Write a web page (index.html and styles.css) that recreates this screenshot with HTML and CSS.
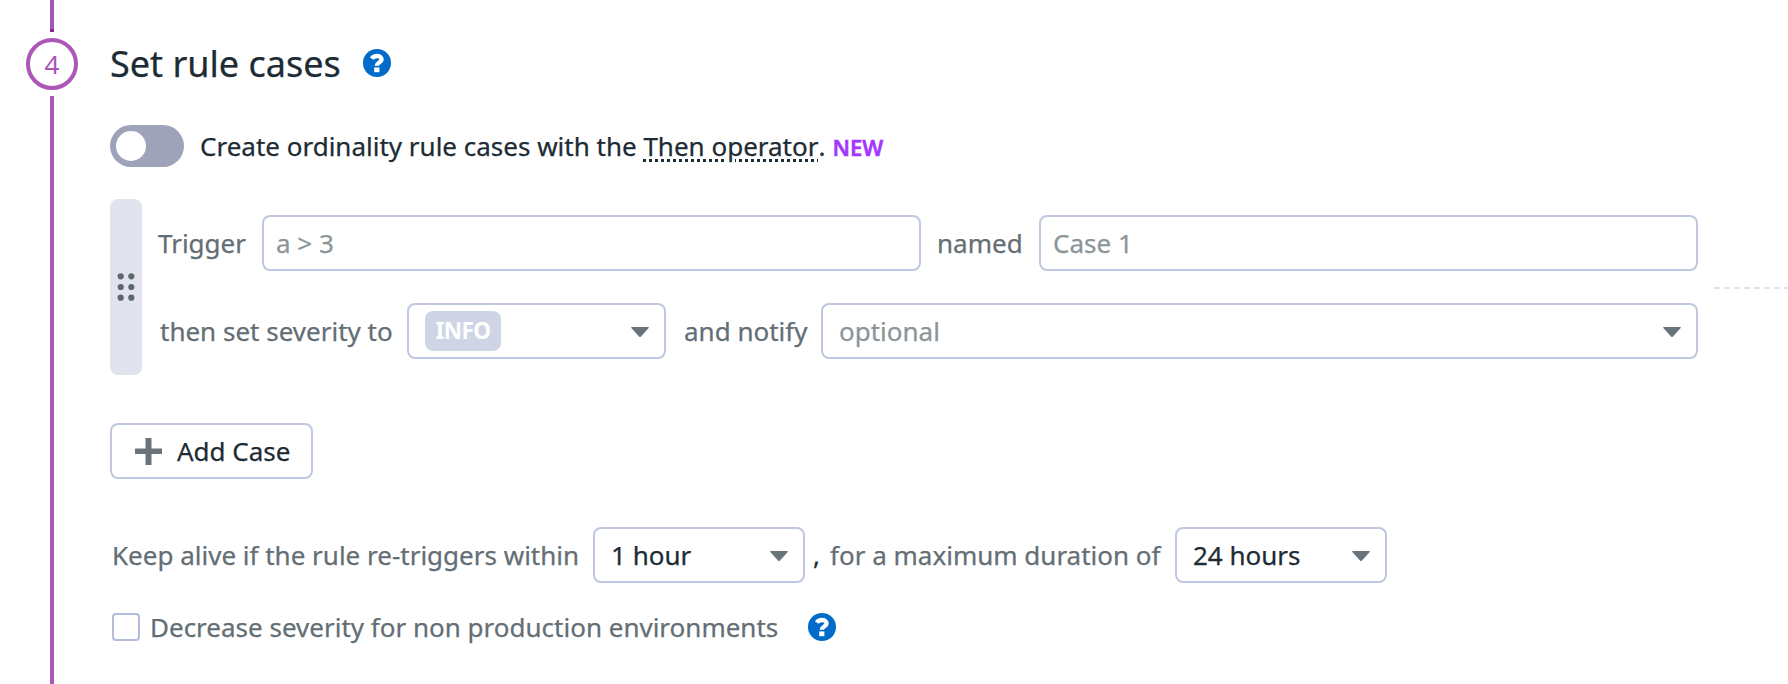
FILE: index.html
```html
<!DOCTYPE html>
<html lang="en">
<head>
<meta charset="utf-8">
<title>Set rule cases</title>
<link rel="stylesheet" href="styles.css">
</head>
<body>
<div class="step">
  <div class="rail">
    <div class="rail-top"></div>
    <div class="step-number">4</div>
    <div class="rail-bottom"></div>
  </div>
  <main class="content">
    <header class="heading">
      <h2 class="title">Set rule cases</h2>
      <svg class="help" viewBox="0 0 28 28"><circle cx="14" cy="14" r="14"/><path class="hook" d="M8.800 9.600C9.900 7.900 11.600 7 13.800 7c2.900 0 4.800 1.400 4.800 3.500 0 3-4.800 3.100-4.800 6.300"/><path class="dot" d="M11.200 18.400h5.200v4.800h-5.200z"/></svg>
    </header>
    <div class="ordinality">
      <span class="toggle"><span class="knob"></span></span>
      <span class="ord-text">Create ordinality rule cases with the <span class="term">Then operator</span><span class="stop">.</span></span>
      <span class="new">NEW</span>
    </div>
    <section class="case">
      <div class="handle">
        <svg width="18" height="28" viewBox="0 0 18 28"><circle cx="3.700" cy="3.300" r="3.100"/><circle cx="14.300" cy="3.300" r="3.100"/><circle cx="3.700" cy="14" r="3.100"/><circle cx="14.300" cy="14" r="3.100"/><circle cx="3.700" cy="24.700" r="3.100"/><circle cx="14.300" cy="24.700" r="3.100"/></svg>
      </div>
      <div class="case-body">
        <div class="row">
          <span class="label trigger">Trigger</span>
          <div class="field input">a &gt; 3</div>
          <span class="label named">named</span>
          <div class="field input">Case 1</div>
        </div>
        <div class="row">
          <span class="label severity">then set severity to</span>
          <div class="field select severity-select"><span class="badge">INFO</span><svg class="caret" viewBox="0 0 18 10"><path d="M.8 0h16.400q1.200 0 .5 1L10 9.400q-1 1-2 0L.3 1Q-.4 0 .8 0z"/></svg></div>
          <span class="label notify">and notify</span>
          <div class="field select grow">optional<svg class="caret" viewBox="0 0 18 10"><path d="M.8 0h16.400q1.200 0 .5 1L10 9.400q-1 1-2 0L.3 1Q-.4 0 .8 0z"/></svg></div>
        </div>
      </div>
      <div class="dashes"></div>
    </section>
    <div class="add">
      <svg width="27" height="27" viewBox="0 0 27 27"><path d="M10.500 0h6v10.500H27v5.500H16.500v11h-6V16H0v-5.500h10.500z"/></svg>
      <span>Add Case</span>
    </div>
    <div class="row keep">
      <span class="label alive">Keep alive if the rule re-triggers within</span>
      <div class="field select time">1 hour<svg class="caret" viewBox="0 0 18 10"><path d="M.8 0h16.400q1.200 0 .5 1L10 9.400q-1 1-2 0L.3 1Q-.4 0 .8 0z"/></svg></div>
      <span class="comma">,</span>
      <span class="label duration">for a maximum duration of</span>
      <div class="field select time">24 hours<svg class="caret" viewBox="0 0 18 10"><path d="M.8 0h16.400q1.200 0 .5 1L10 9.400q-1 1-2 0L.3 1Q-.4 0 .8 0z"/></svg></div>
    </div>
    <div class="decrease">
      <span class="checkbox"></span>
      <span class="label dec-text">Decrease severity for non production environments</span>
      <svg class="help" viewBox="0 0 28 28"><circle cx="14" cy="14" r="14"/><path class="hook" d="M8.800 9.600C9.900 7.900 11.600 7 13.800 7c2.900 0 4.800 1.400 4.800 3.500 0 3-4.800 3.100-4.800 6.300"/><path class="dot" d="M11.200 18.400h5.200v4.800h-5.200z"/></svg>
    </div>
  </main>
</div>
</body>
</html>
```

FILE: styles.css
```css
* { box-sizing: border-box; }
body {
  margin: 0;
  background: #fff;
  color: #1c2b34;
  font: 26px/36px "Noto Sans", sans-serif;
  -webkit-text-stroke: .25px;
  overflow: hidden;
}
svg { display: block; flex: none; }
.step { display: flex; height: 684px; }
.rail {
  width: 110px;
  padding-left: 26px;
  flex: none;
  display: flex;
  flex-direction: column;
}
.rail-top {
  width: 4px;
  height: 32px;
  margin-left: 24px;
  background: #a157b8;
  border-bottom: 3px solid #8f2299;
}
.step-number {
  width: 52px;
  height: 52px;
  margin: 6px 0;
  border: 4px solid #ac56b8;
  border-radius: 50%;
  color: #ac56b8;
  display: flex;
  align-items: center;
  justify-content: center;
  -webkit-text-stroke: 0;
}
.rail-bottom { width: 4px; flex: 1; margin-left: 24px; background: #ac56b8; }
.content { flex: 1; min-width: 0; }
.heading { display: flex; height: 125px; padding-top: 39px; }
.title { margin: 0; width: 253px; font-size: 36px; font-weight: 400; line-height: 50px; white-space: nowrap; }
.heading .help { margin-top: 10px; }
.help { width: 28px; height: 28px; fill: #006bc8; }
.help .hook { fill: none; stroke: #fff; stroke-width: 4.400; }
.help .dot { fill: #fff; }
.ordinality { display: flex; align-items: center; height: 42px; white-space: nowrap; }
.toggle {
  width: 74px;
  height: 42px;
  padding: 6px;
  margin-right: 16px;
  border-radius: 21px;
  background: #9ea3b9;
}
.knob { display: block; width: 30px; height: 30px; border-radius: 50%; background: #fff; }
.term {
  display: inline-block;
  text-decoration: underline dotted;
  text-decoration-thickness: 3px;
  text-underline-offset: 3px;
}
.stop { display: inline-block; }
.new { margin-left: 7px; color: #a336ff; font-size: 22px; font-weight: 600; padding-top: 2px; -webkit-text-stroke: .5px; }
.case { display: flex; margin-top: 32px; height: 176px; }
.handle {
  width: 32px;
  flex: none;
  border-radius: 8px;
  background: #e1e4ee;
  fill: #5c676e;
  display: flex;
  align-items: center;
  justify-content: center;
}
.case-body {
  width: 1556px;
  padding: 16px 0 16px 16px;
  display: flex;
  flex-direction: column;
  justify-content: space-between;
}
.row { display: flex; align-items: center; }
.label { color: #636e75; white-space: nowrap; flex: none; }
.trigger { width: 104px; }
.named { width: 118px; padding-left: 16px; }
.severity { width: 249px; padding-left: 2px; }
.notify { width: 155px; padding-left: 18px; }
.field {
  height: 56px;
  border: 2px solid #c0c7e0;
  border-radius: 8px;
  display: flex;
  align-items: center;
  white-space: nowrap;
}
.input { flex: 1; padding-left: 12px; color: #8b9598; }
.select { justify-content: space-between; padding: 0 15px 0 16px; }
.grow { flex: 1; color: #8b9598; }
.severity-select { width: 259px; }
.badge {
  height: 40px;
  width: 76px;
  border-radius: 8px;
  background: #d0d5e6;
  color: #fff;
  font-size: 22.5px;
  font-weight: 700;
  line-height: 40px;
  letter-spacing: -.6px;
  text-align: center;
  -webkit-text-stroke: 0;
}
.caret { width: 18px; height: 10px; margin-top: 2px; fill: #69747b; }
.dashes {
  flex: 1;
  margin: 88px 0 0 16px;
  height: 2px;
  background: repeating-linear-gradient(90deg, #e1e3ed 0 6px, transparent 6px 10px);
}
.add {
  width: 203px;
  height: 56px;
  margin-top: 48px;
  padding-left: 23px;
  border: 2px solid #c0c7e0;
  border-radius: 8px;
  display: flex;
  align-items: center;
  gap: 15px;
  fill: #69747b;
  white-space: nowrap;
}
.keep { margin-top: 48px; }
.alive { width: 483px; padding-left: 2px; }
.time { width: 212px; flex: none; }
.comma { width: 24px; padding-left: 8px; }
.duration { width: 346px; padding-left: 1px; }
.decrease { display: flex; align-items: center; margin-top: 26px; padding-left: 2px; }
.checkbox { width: 28px; height: 28px; border: 2px solid #b3bcda; border-radius: 4px; }
.dec-text { width: 668px; padding-left: 10px; }
```
